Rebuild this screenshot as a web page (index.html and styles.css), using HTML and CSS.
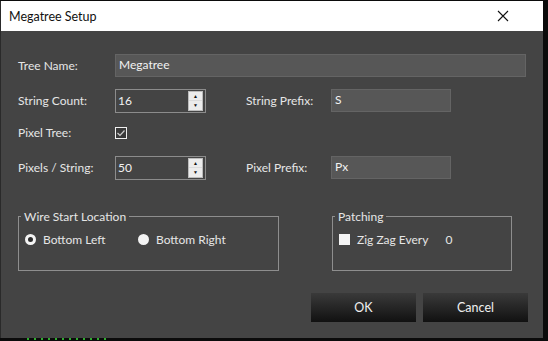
FILE: index.html
```html
<!DOCTYPE html>
<html lang="en">
<head>
    <meta charset="UTF-8">
    <title>Megatree Setup</title>
    <link rel="stylesheet" href="styles.css">
</head>
<body>
    <div class="dialog">
        <div class="titlebar">
            <span class="title">Megatree Setup</span>
            <svg class="close" width="12" height="12" viewBox="0 0 12 12">
                <path d="M1 1 L11 11 M11 1 L1 11" stroke="#111" stroke-width="1.1" fill="none"/>
            </svg>
        </div>

        <div class="content">
            <div class="row row-name">
                <label class="label">Tree Name:</label>
                <div class="field field-wide">Megatree</div>
            </div>

            <div class="row row-count">
                <label class="label">String Count:</label>
                <div class="spin">
                    <span class="spin-value">16</span>
                    <div class="spin-buttons">
                        <span class="spin-btn">&#9650;</span>
                        <span class="spin-btn">&#9660;</span>
                    </div>
                </div>
                <label class="label label-right">String Prefix:</label>
                <div class="field field-short">S</div>
            </div>

            <div class="row row-tree">
                <label class="label">Pixel Tree:</label>
                <span class="check">
                    <svg width="10" height="10" viewBox="0 0 10 10">
                        <path d="M1.5 5 L4 7.5 L8.5 2.5" stroke="#cfcfcf" stroke-width="1.2" fill="none"/>
                    </svg>
                </span>
            </div>

            <div class="row row-pixels">
                <label class="label">Pixels / String:</label>
                <div class="spin">
                    <span class="spin-value">50</span>
                    <div class="spin-buttons">
                        <span class="spin-btn">&#9650;</span>
                        <span class="spin-btn">&#9660;</span>
                    </div>
                </div>
                <label class="label label-right">Pixel Prefix:</label>
                <div class="field field-short">Px</div>
            </div>

            <div class="groups">
                <fieldset class="group group-wire">
                    <legend>Wire Start Location</legend>
                    <div class="options">
                        <span class="option"><span class="radio"></span>Bottom Left</span>
                        <span class="option"><span class="radio radio-on"></span>Bottom Right</span>
                    </div>
                </fieldset>
                <fieldset class="group group-patch">
                    <legend>Patching</legend>
                    <div class="options">
                        <span class="option"><span class="box"></span>Zig Zag Every</span>
                        <span class="zig-value">0</span>
                    </div>
                </fieldset>
            </div>

            <div class="buttons">
                <button class="btn">OK</button>
                <button class="btn">Cancel</button>
            </div>
        </div>
    </div>
    <div class="console"></div>
</body>
</html>
```

FILE: styles.css
```css
body {
    margin: 0;
    background-color: #0b0b0b;
    font-family: Lato, "Noto Sans", Arial, sans-serif;
    font-size: 12px;
    color: #e6e6e6;
    width: 548px;
    height: 341px;
    overflow: hidden;
}

.dialog {
    width: 543px;
    height: 337px;
    margin-top: 1px;
    background-color: #444444;
    border-left: 1px solid #2a2a2a;
    box-sizing: border-box;
}

.titlebar {
    height: 30px;
    background-color: #ffffff;
    display: flex;
    align-items: center;
    justify-content: space-between;
    padding: 0 34px 0 8px;
}

.title {
    color: #111;
    font-size: 12.5px;
}

.content {
    padding: 23px 0 0 17px;
}

.row {
    display: flex;
    align-items: center;
    height: 23px;
}

.row-count {
    margin-top: 12px;
}

.row-tree {
    margin-top: 9px;
}

.row-pixels {
    margin-top: 12px;
}

.label {
    width: 97px;
    flex-shrink: 0;
}

.label-right {
    width: 85px;
    margin-left: 40px;
}

.field {
    height: 23px;
    box-sizing: border-box;
    background-color: #575757;
    border: 1px solid #646464;
    color: #f2f2f2;
    padding: 1px 0 0 3px;
    line-height: 18px;
}

.field-wide {
    width: 411px;
}

.field-short {
    width: 120px;
}

.spin {
    width: 91px;
    height: 24px;
    box-sizing: border-box;
    border: 1px solid #8c8c8c;
    background-color: #444;
    display: flex;
    align-items: center;
    justify-content: space-between;
    padding-left: 2px;
}

.spin-value {
    color: #f2f2f2;
}

.spin-buttons {
    width: 15px;
    height: 20px;
    margin-right: 2px;
    background-color: #dcdcdc;
    display: flex;
    flex-direction: column;
    gap: 1px;
    border: 1px solid #bcbcbc;
    box-sizing: border-box;
}

.spin-btn {
    flex: 1;
    background-color: #ececec;
    color: #111;
    font-size: 5px;
    line-height: 8px;
    text-align: center;
}

.check {
    width: 12px;
    height: 12px;
    box-sizing: border-box;
    border: 1px solid #f0f0f0;
    background-color: #3a3a3a;
    display: flex;
    align-items: center;
    justify-content: center;
}

.groups {
    display: flex;
    gap: 53px;
    margin-top: 30px;
}

.group {
    margin: 0;
    border: 1px solid #8e8e8e;
    padding: 8px 6px 0 6px;
    height: 62px;
    box-sizing: border-box;
}

.group legend {
    padding: 0 3px;
    margin-left: -4px;
    color: #e6e6e6;
}

.group-wire {
    width: 261px;
}

.group-patch {
    width: 180px;
}

.options {
    display: flex;
    align-items: center;
}

.option {
    display: flex;
    align-items: center;
    gap: 7px;
}

.group-wire .option {
    width: 113px;
}

.radio {
    width: 11px;
    height: 11px;
    box-sizing: border-box;
    border-radius: 50%;
    border: 3px solid #f4f4f4;
    background-color: #2c2c2c;
}

.radio-on {
    background-color: #f4f4f4;
}

.box {
    width: 11px;
    height: 11px;
    background-color: #f4f4f4;
}

.zig-value {
    margin-left: 17px;
}

.buttons {
    display: flex;
    justify-content: flex-end;
    gap: 7px;
    margin-top: 22px;
    padding-right: 15px;
}

.btn {
    width: 105px;
    height: 29px;
    border: none;
    background: linear-gradient(#3a3a3a, #111111);
    color: #f0f0f0;
    font-family: Lato, "Noto Sans", Arial, sans-serif;
    font-size: 12.5px;
}

.console {
    height: 2px;
    margin-left: 27px;
    width: 80px;
    background: repeating-linear-gradient(90deg, #2fae2f 0 2px, transparent 2px 7px);
}
```
